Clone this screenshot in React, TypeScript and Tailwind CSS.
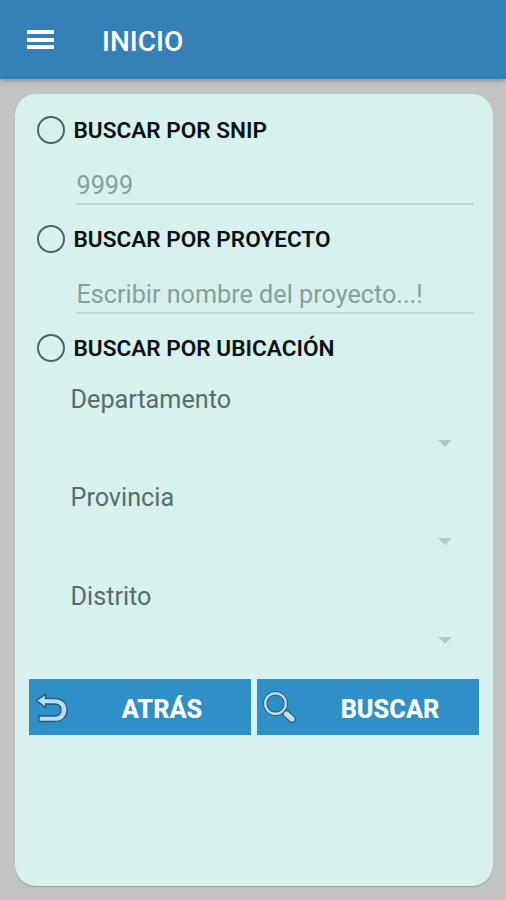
import type { ReactNode } from "react";

const locations = ["Departamento", "Provincia", "Distrito"];

function RadioRow({ label }: { label: string }) {
  return (
    <label className="flex h-[42px] items-center">
      <span className="h-7 w-7 shrink-0 rounded-full border-2 border-[#53615f]" />
      <span className="ml-[9px] pt-[4px] text-[22.6px] font-semibold leading-none whitespace-nowrap text-[#0a1110]">{label}</span>
    </label>
  );
}

function Field({ hint }: { hint: string }) {
  return (
    <div className="ml-[39px] mr-[-1px] h-[67px]">
      <div className="h-[54px] border-b-2 border-[#bfd8d4] pl-[1px] pt-[20px] text-[25.2px] leading-[29px] text-[#86a09b]">{hint}</div>
    </div>
  );
}

function LocationSelect({ label }: { label: string }) {
  return (
    <div className="ml-[34px] mr-[21px] h-[98.5px]">
      <div className="text-[25.2px] leading-[29px] text-[#566d69]">{label}</div>
      <div className="flex justify-end pt-[26px]">
        <svg width="14" height="7" viewBox="0 0 14 7" className="fill-[#aeccc7]">
          <path d="M0 0h14L7 7z" />
        </svg>
      </div>
    </div>
  );
}

function ActionButton({ icon, label }: { icon: ReactNode; label: string }) {
  return (
    <button className="flex h-[56px] w-[222px] items-center bg-[#2f90c7] pl-[6px] pt-[2px] text-white">
      {icon}
      <span className="flex-1 pl-[5px] pt-[3px] text-center text-[25.3px] font-extrabold leading-none">{label}</span>
    </button>
  );
}

function BackIcon() {
  return (
    <svg width="34" height="34" viewBox="0 0 34 34" className="shrink-0">
      <path
        d="M1.5 9.5 10.5 3.5V7.5h9.500c7 0 12 4.500 12 11.500s-5 11.500-12 11.500H4v-5.500h15.500c4 0 6.500-2.300 6.500-6s-2.500-6-6.500-6h-9v3.500z"
        fill="#b9dcf0"
        stroke="#26597a"
        strokeWidth="1.3"
        strokeLinejoin="round"
      />
    </svg>
  );
}

function SearchIcon() {
  return (
    <svg width="34" height="34" viewBox="0 0 34 34" className="shrink-0">
      <path d="m20 19.500 4 4" stroke="#26597a" strokeWidth="4" />
      <circle cx="12.5" cy="12.5" r="10.3" fill="none" stroke="#26597a" strokeWidth="4.2" />
      <circle cx="12.5" cy="12.5" r="10.3" fill="none" stroke="#bcdce3" strokeWidth="2.4" />
      <path d="m23.500 23 5.500 5" stroke="#26597a" strokeWidth="7.6" strokeLinecap="round" />
      <path d="m23.500 23 5.500 5" stroke="#c5ddf2" strokeWidth="5.4" strokeLinecap="round" />
    </svg>
  );
}

export default function App() {
  return (
    <div className="flex h-[900px] w-[506px] flex-col bg-[#c3c3c4] font-[Roboto]">
      <header className="z-10 flex h-[79px] shrink-0 items-center bg-[#3680b8] pl-[26.5px] pt-[3px] text-white shadow-[0_1px_5px_rgba(0,0,0,0.35)]">
        <div className="-mt-[3px] flex w-[27px] flex-col gap-[3.5px]">
          <span className="h-1 bg-white" />
          <span className="h-1 bg-white" />
          <span className="h-1 bg-white" />
        </div>
        <h1 className="ml-[48.5px] pt-[2px] text-[28px] font-medium leading-none">INICIO</h1>
      </header>

      <main className="ml-[14.5px] mt-[14.5px] h-[792.5px] w-[478px] rounded-[21px] bg-[#d7f1ef] pt-[15px] shadow-[0_1px_1px_rgba(0,0,0,0.2)]">
        <div className="pl-[22px] pr-[20px]">
          <RadioRow label="BUSCAR POR SNIP" />
          <Field hint="9999" />
          <RadioRow label="BUSCAR POR PROYECTO" />
          <Field hint="Escribir nombre del proyecto...!" />
          <RadioRow label="BUSCAR POR UBICACIÓN" />
        </div>
        <div className="pl-[22px] pr-[20px] pt-[16px]">
          {locations.map((name) => (
            <LocationSelect key={name} label={name} />
          ))}
        </div>
        <div className="-mt-[1px] flex gap-[6px] pl-[14px]">
          <ActionButton icon={<BackIcon />} label="ATRÁS" />
          <ActionButton icon={<SearchIcon />} label="BUSCAR" />
        </div>
      </main>
    </div>
  );
}
